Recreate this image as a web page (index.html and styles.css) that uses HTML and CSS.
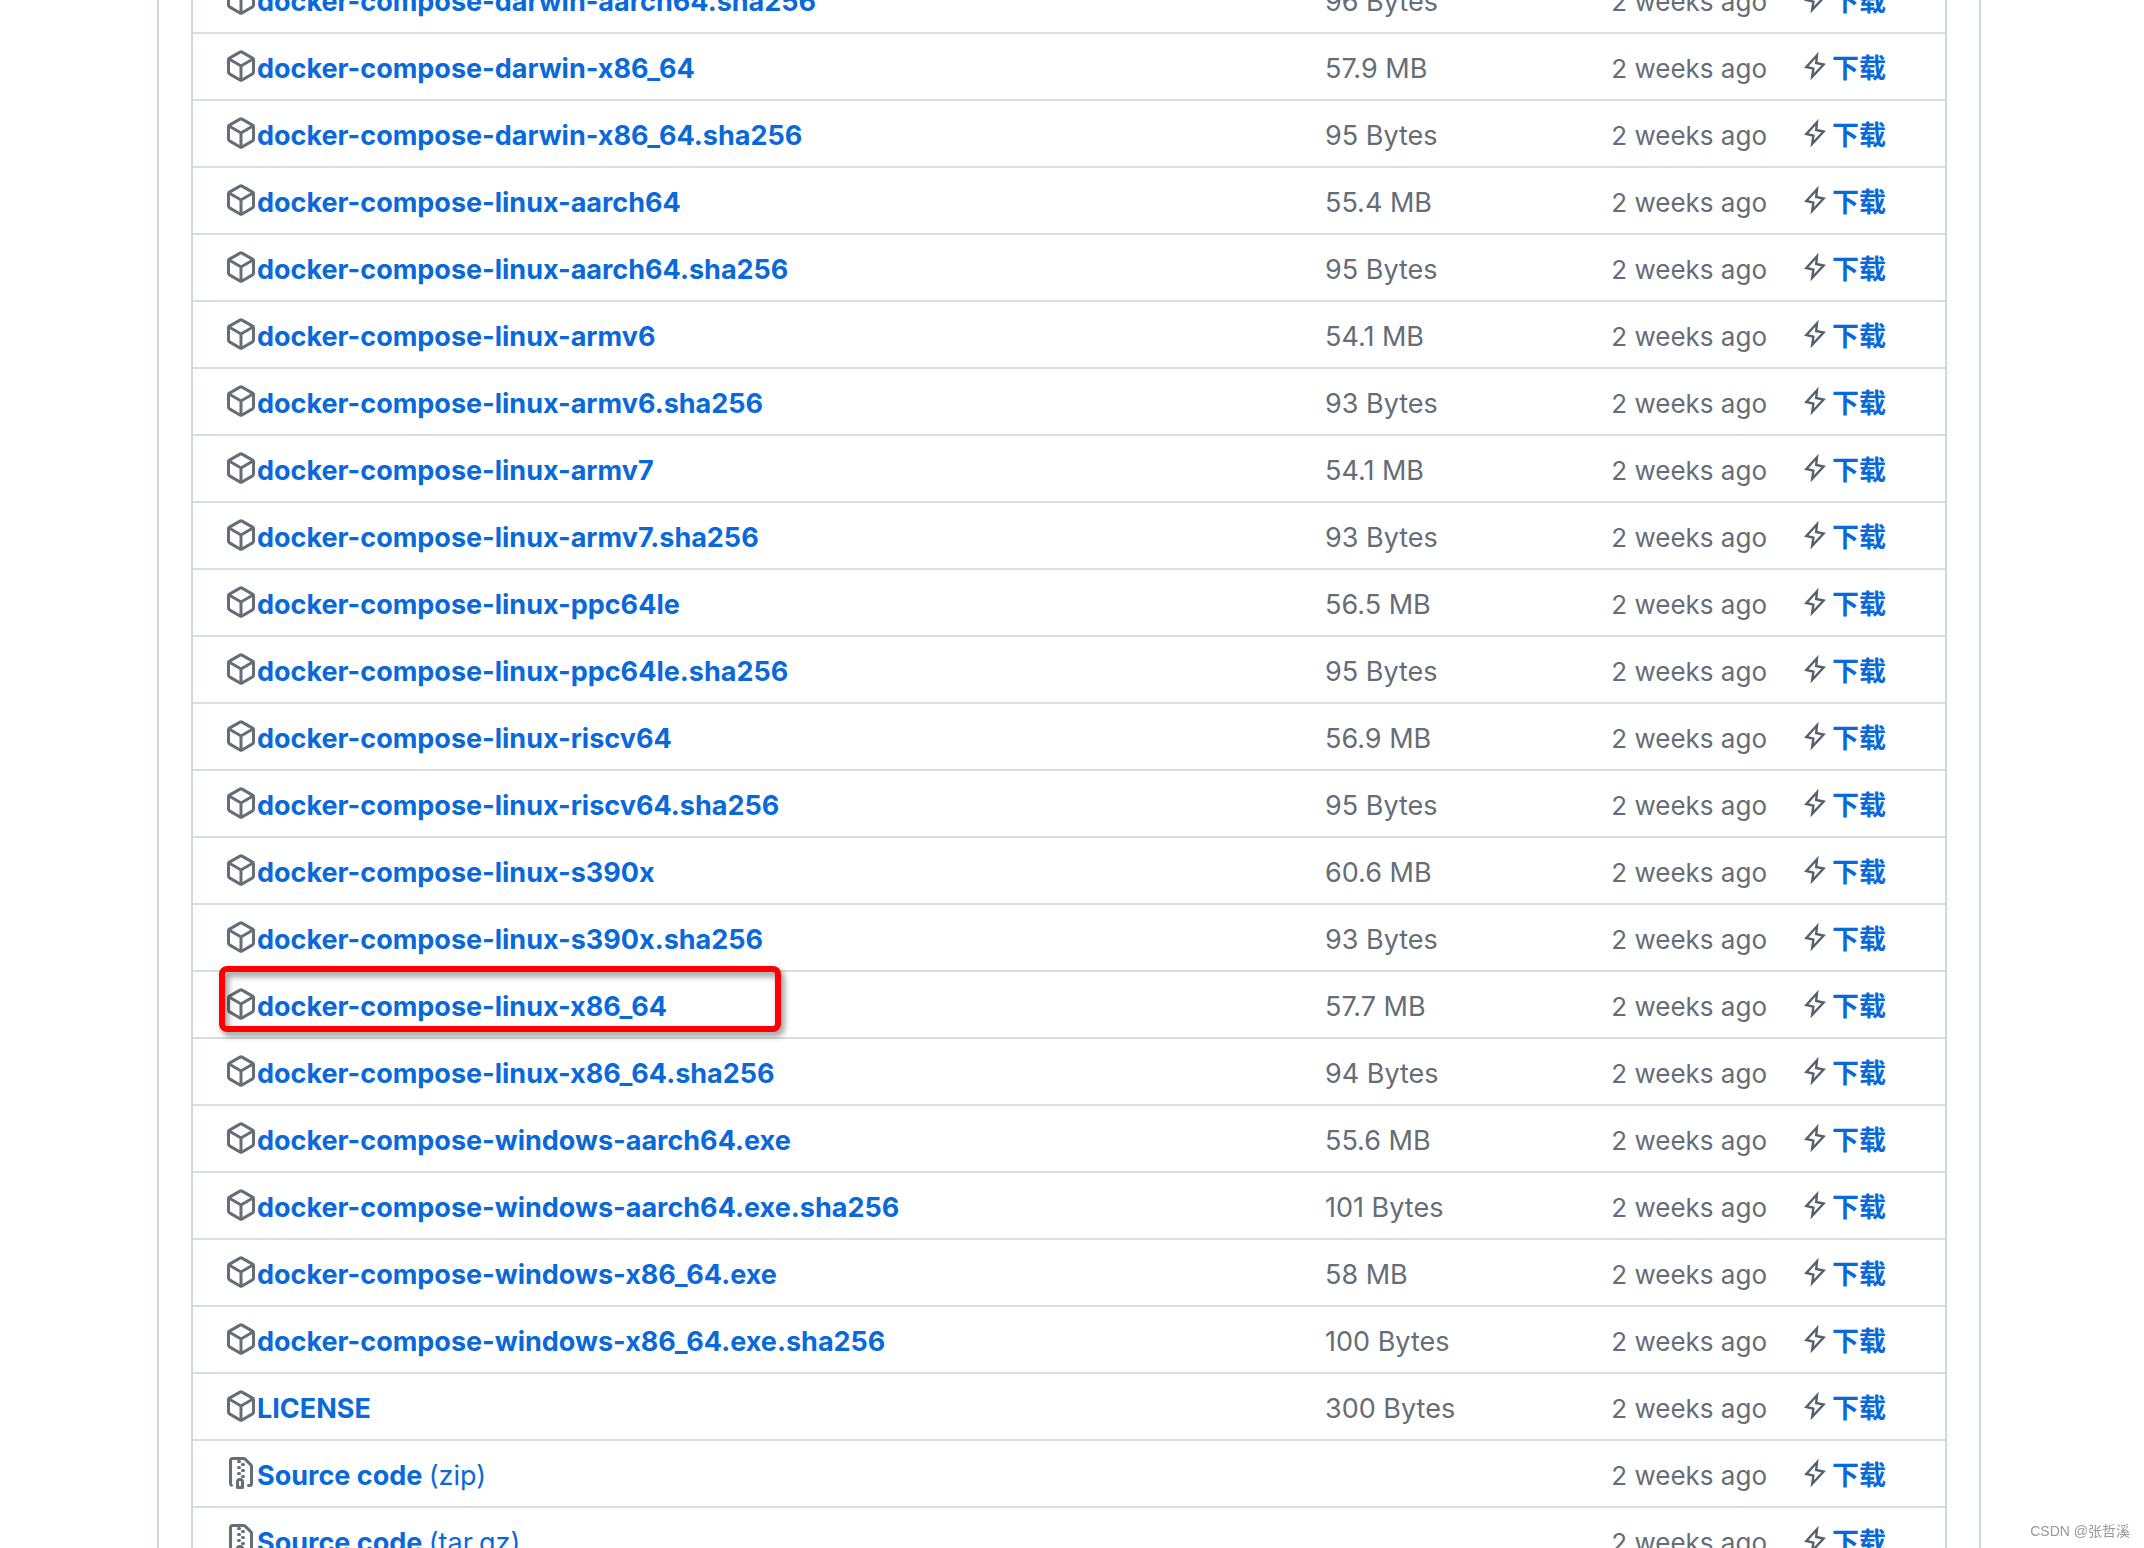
FILE: index.html
```html
<!DOCTYPE html>
<html lang="en">
<head>
<meta charset="utf-8">
<title>Release assets</title>
<link rel="stylesheet" href="styles.css">
</head>
<body>
<svg class="sprite" aria-hidden="true">
  <symbol id="package" viewBox="0 0 16 16"><path d="m8.878.392 5.25 3.045c.54.314.872.89.872 1.514v6.098a1.75 1.75 0 0 1-.872 1.514l-5.25 3.045a1.75 1.75 0 0 1-1.756 0l-5.25-3.045A1.75 1.75 0 0 1 1 11.049V4.951c0-.624.332-1.201.872-1.514L7.122.392a1.75 1.75 0 0 1 1.756 0ZM7.875 1.69l-4.63 2.685L8 7.133l4.755-2.758-4.63-2.685a.248.248 0 0 0-.25 0ZM2.5 5.677v5.372c0 .09.047.171.125.216l4.625 2.683V8.432Zm6.25 8.271 4.625-2.683a.25.25 0 0 0 .125-.216V5.677L8.75 8.432Z"/></symbol>
  <symbol id="zip" viewBox="0 0 16 16"><path d="M3.5 1.75v11.5c0 .09.048.173.126.217a.75.75 0 0 1-.752 1.298A1.748 1.748 0 0 1 2 13.25V1.75C2 .784 2.784 0 3.75 0h5.586c.464 0 .909.185 1.237.513l2.914 2.914c.329.328.513.773.513 1.237v8.586A1.75 1.75 0 0 1 12.25 15h-.5a.75.75 0 0 1 0-1.5h.5a.25.25 0 0 0 .25-.25V4.664a.25.25 0 0 0-.073-.177L9.513 1.573a.25.25 0 0 0-.177-.073H7.25a.75.75 0 0 1 0 1.5h-.5a.75.75 0 0 1 0-1.5h-3a.25.25 0 0 0-.25.25Zm3.75 8.75h.5c.966 0 1.75.784 1.75 1.75v3a.75.75 0 0 1-.75.75h-2.5a.75.75 0 0 1-.75-.75v-3c0-.966.784-1.75 1.75-1.75ZM6 5.25a.75.75 0 0 1 .75-.75h.5a.75.75 0 0 1 0 1.5h-.5A.75.75 0 0 1 6 5.25Zm.75 2.25h.5a.75.75 0 0 1 0 1.5h-.5a.75.75 0 0 1 0-1.5ZM8 6.75A.75.75 0 0 1 8.75 6h.5a.75.75 0 0 1 0 1.5h-.5A.75.75 0 0 1 8 6.75ZM8.75 3h.5a.75.75 0 0 1 0 1.5h-.5a.75.75 0 0 1 0-1.5ZM8 9.75A.75.75 0 0 1 8.75 9h.5a.75.75 0 0 1 0 1.5h-.5A.75.75 0 0 1 8 9.75Zm-1 2.5v2.25h1v-2.25a.25.25 0 0 0-.25-.25h-.5a.25.25 0 0 0-.25.25Z"/></symbol>
  <symbol id="bolt" viewBox="0 0 22 28"><path d="M13 3.2 2.3 15 9.4 16.6 8.2 24.8 19.6 12.6 12.2 11Z" fill="none" stroke="currentColor" stroke-width="2.4"/></symbol>
</svg>
<main class="page">
  <section class="release">
    <table class="assets">
      <colgroup><col><col class="col-size"><col class="col-date"><col class="col-get"></colgroup>
      <tbody>
        <tr><td><div class="asset"><svg class="icon"><use href="#package"/></svg><a href="#">docker-compose-darwin-aarch64.sha256</a></div></td><td>96 Bytes</td><td class="date">2 weeks ago</td><td><div class="get"><svg class="bolt"><use href="#bolt"/></svg><a href="#" lang="zh">下载</a></div></td></tr>
        <tr><td><div class="asset"><svg class="icon"><use href="#package"/></svg><a href="#">docker-compose-darwin-x86_64</a></div></td><td>57.9 MB</td><td class="date">2 weeks ago</td><td><div class="get"><svg class="bolt"><use href="#bolt"/></svg><a href="#" lang="zh">下载</a></div></td></tr>
        <tr><td><div class="asset"><svg class="icon"><use href="#package"/></svg><a href="#">docker-compose-darwin-x86_64.sha256</a></div></td><td>95 Bytes</td><td class="date">2 weeks ago</td><td><div class="get"><svg class="bolt"><use href="#bolt"/></svg><a href="#" lang="zh">下载</a></div></td></tr>
        <tr><td><div class="asset"><svg class="icon"><use href="#package"/></svg><a href="#">docker-compose-linux-aarch64</a></div></td><td>55.4 MB</td><td class="date">2 weeks ago</td><td><div class="get"><svg class="bolt"><use href="#bolt"/></svg><a href="#" lang="zh">下载</a></div></td></tr>
        <tr><td><div class="asset"><svg class="icon"><use href="#package"/></svg><a href="#">docker-compose-linux-aarch64.sha256</a></div></td><td>95 Bytes</td><td class="date">2 weeks ago</td><td><div class="get"><svg class="bolt"><use href="#bolt"/></svg><a href="#" lang="zh">下载</a></div></td></tr>
        <tr><td><div class="asset"><svg class="icon"><use href="#package"/></svg><a href="#">docker-compose-linux-armv6</a></div></td><td>54.1 MB</td><td class="date">2 weeks ago</td><td><div class="get"><svg class="bolt"><use href="#bolt"/></svg><a href="#" lang="zh">下载</a></div></td></tr>
        <tr><td><div class="asset"><svg class="icon"><use href="#package"/></svg><a href="#">docker-compose-linux-armv6.sha256</a></div></td><td>93 Bytes</td><td class="date">2 weeks ago</td><td><div class="get"><svg class="bolt"><use href="#bolt"/></svg><a href="#" lang="zh">下载</a></div></td></tr>
        <tr><td><div class="asset"><svg class="icon"><use href="#package"/></svg><a href="#">docker-compose-linux-armv7</a></div></td><td>54.1 MB</td><td class="date">2 weeks ago</td><td><div class="get"><svg class="bolt"><use href="#bolt"/></svg><a href="#" lang="zh">下载</a></div></td></tr>
        <tr><td><div class="asset"><svg class="icon"><use href="#package"/></svg><a href="#">docker-compose-linux-armv7.sha256</a></div></td><td>93 Bytes</td><td class="date">2 weeks ago</td><td><div class="get"><svg class="bolt"><use href="#bolt"/></svg><a href="#" lang="zh">下载</a></div></td></tr>
        <tr><td><div class="asset"><svg class="icon"><use href="#package"/></svg><a href="#">docker-compose-linux-ppc64le</a></div></td><td>56.5 MB</td><td class="date">2 weeks ago</td><td><div class="get"><svg class="bolt"><use href="#bolt"/></svg><a href="#" lang="zh">下载</a></div></td></tr>
        <tr><td><div class="asset"><svg class="icon"><use href="#package"/></svg><a href="#">docker-compose-linux-ppc64le.sha256</a></div></td><td>95 Bytes</td><td class="date">2 weeks ago</td><td><div class="get"><svg class="bolt"><use href="#bolt"/></svg><a href="#" lang="zh">下载</a></div></td></tr>
        <tr><td><div class="asset"><svg class="icon"><use href="#package"/></svg><a href="#">docker-compose-linux-riscv64</a></div></td><td>56.9 MB</td><td class="date">2 weeks ago</td><td><div class="get"><svg class="bolt"><use href="#bolt"/></svg><a href="#" lang="zh">下载</a></div></td></tr>
        <tr><td><div class="asset"><svg class="icon"><use href="#package"/></svg><a href="#">docker-compose-linux-riscv64.sha256</a></div></td><td>95 Bytes</td><td class="date">2 weeks ago</td><td><div class="get"><svg class="bolt"><use href="#bolt"/></svg><a href="#" lang="zh">下载</a></div></td></tr>
        <tr><td><div class="asset"><svg class="icon"><use href="#package"/></svg><a href="#">docker-compose-linux-s390x</a></div></td><td>60.6 MB</td><td class="date">2 weeks ago</td><td><div class="get"><svg class="bolt"><use href="#bolt"/></svg><a href="#" lang="zh">下载</a></div></td></tr>
        <tr><td><div class="asset"><svg class="icon"><use href="#package"/></svg><a href="#">docker-compose-linux-s390x.sha256</a></div></td><td>93 Bytes</td><td class="date">2 weeks ago</td><td><div class="get"><svg class="bolt"><use href="#bolt"/></svg><a href="#" lang="zh">下载</a></div></td></tr>
        <tr><td><div class="asset marked"><svg class="icon"><use href="#package"/></svg><a href="#">docker-compose-linux-x86_64</a></div></td><td>57.7 MB</td><td class="date">2 weeks ago</td><td><div class="get"><svg class="bolt"><use href="#bolt"/></svg><a href="#" lang="zh">下载</a></div></td></tr>
        <tr><td><div class="asset"><svg class="icon"><use href="#package"/></svg><a href="#">docker-compose-linux-x86_64.sha256</a></div></td><td>94 Bytes</td><td class="date">2 weeks ago</td><td><div class="get"><svg class="bolt"><use href="#bolt"/></svg><a href="#" lang="zh">下载</a></div></td></tr>
        <tr><td><div class="asset"><svg class="icon"><use href="#package"/></svg><a href="#">docker-compose-windows-aarch64.exe</a></div></td><td>55.6 MB</td><td class="date">2 weeks ago</td><td><div class="get"><svg class="bolt"><use href="#bolt"/></svg><a href="#" lang="zh">下载</a></div></td></tr>
        <tr><td><div class="asset"><svg class="icon"><use href="#package"/></svg><a href="#">docker-compose-windows-aarch64.exe.sha256</a></div></td><td>101 Bytes</td><td class="date">2 weeks ago</td><td><div class="get"><svg class="bolt"><use href="#bolt"/></svg><a href="#" lang="zh">下载</a></div></td></tr>
        <tr><td><div class="asset"><svg class="icon"><use href="#package"/></svg><a href="#">docker-compose-windows-x86_64.exe</a></div></td><td>58 MB</td><td class="date">2 weeks ago</td><td><div class="get"><svg class="bolt"><use href="#bolt"/></svg><a href="#" lang="zh">下载</a></div></td></tr>
        <tr><td><div class="asset"><svg class="icon"><use href="#package"/></svg><a href="#">docker-compose-windows-x86_64.exe.sha256</a></div></td><td>100 Bytes</td><td class="date">2 weeks ago</td><td><div class="get"><svg class="bolt"><use href="#bolt"/></svg><a href="#" lang="zh">下载</a></div></td></tr>
        <tr><td><div class="asset"><svg class="icon"><use href="#package"/></svg><a href="#">LICENSE</a></div></td><td>300 Bytes</td><td class="date">2 weeks ago</td><td><div class="get"><svg class="bolt"><use href="#bolt"/></svg><a href="#" lang="zh">下载</a></div></td></tr>
        <tr><td><div class="asset"><svg class="icon"><use href="#zip"/></svg><a href="#">Source code <span class="format">(zip)</span></a></div></td><td></td><td class="date">2 weeks ago</td><td><div class="get"><svg class="bolt"><use href="#bolt"/></svg><a href="#" lang="zh">下载</a></div></td></tr>
        <tr><td><div class="asset"><svg class="icon"><use href="#zip"/></svg><a href="#">Source code <span class="format">(tar.gz)</span></a></div></td><td></td><td class="date">2 weeks ago</td><td><div class="get"><svg class="bolt"><use href="#bolt"/></svg><a href="#" lang="zh">下载</a></div></td></tr>
      </tbody>
    </table>
  </section>
</main>
<div class="watermark">CSDN @张哲溪</div>
</body>
</html>
```
FILE: styles.css
```css
*, *::after { box-sizing: border-box; }

body {
  margin: 0;
  height: 100vh;
  overflow: hidden;
  background: #fff;
  color: #656d76;
  font: 27px/36px Inter, "Noto Sans CJK SC", sans-serif;
}

.sprite { position: absolute; width: 0; height: 0; }

.page { padding: 0 163px 0 157px; }

.release {
  padding: 0 32px;
  border: solid #d0d7de;
  border-width: 0 2px;
}

/* The list is scrolled half a row past the top of the window. */
.assets {
  width: 100%;
  margin-top: -33px;
  table-layout: fixed;
  border-collapse: separate;
  border-spacing: 0;
  border: solid #d0d7de;
  border-width: 0 2px;
}

.col-size { width: 240px; }
.col-date { width: 239px; }
.col-get { width: 141px; }

td {
  height: 67px;
  padding: 4px 0 0;
  border-bottom: 2px solid #d8dee4;
  vertical-align: middle;
  white-space: nowrap;
}

.date { padding-right: 37px; font-size: 26px; text-align: right; }

.asset, .get { display: flex; align-items: center; }
.asset { position: relative; padding-left: 32px; }
.get { gap: 6px; }

a { color: #0969da; font-weight: 700; text-decoration: none; }
.format { font-weight: 400; }

.icon { width: 32px; height: 32px; margin-bottom: 6px; fill: #656d76; }
.bolt { width: 22px; height: 28px; margin-bottom: 6px; color: #57606a; }

.marked::after {
  content: "";
  position: absolute;
  top: -22px;
  left: 26px;
  width: 562px;
  height: 66px;
  border: 6px solid #f00;
  border-radius: 8px;
  filter: drop-shadow(3px 4px 3px rgb(0 0 0 / 45%));
  pointer-events: none;
}

.watermark {
  position: fixed;
  right: 14px;
  bottom: 6px;
  color: #999;
  font: 14px/22px "Liberation Sans", "Noto Sans CJK SC", sans-serif;
}
```
